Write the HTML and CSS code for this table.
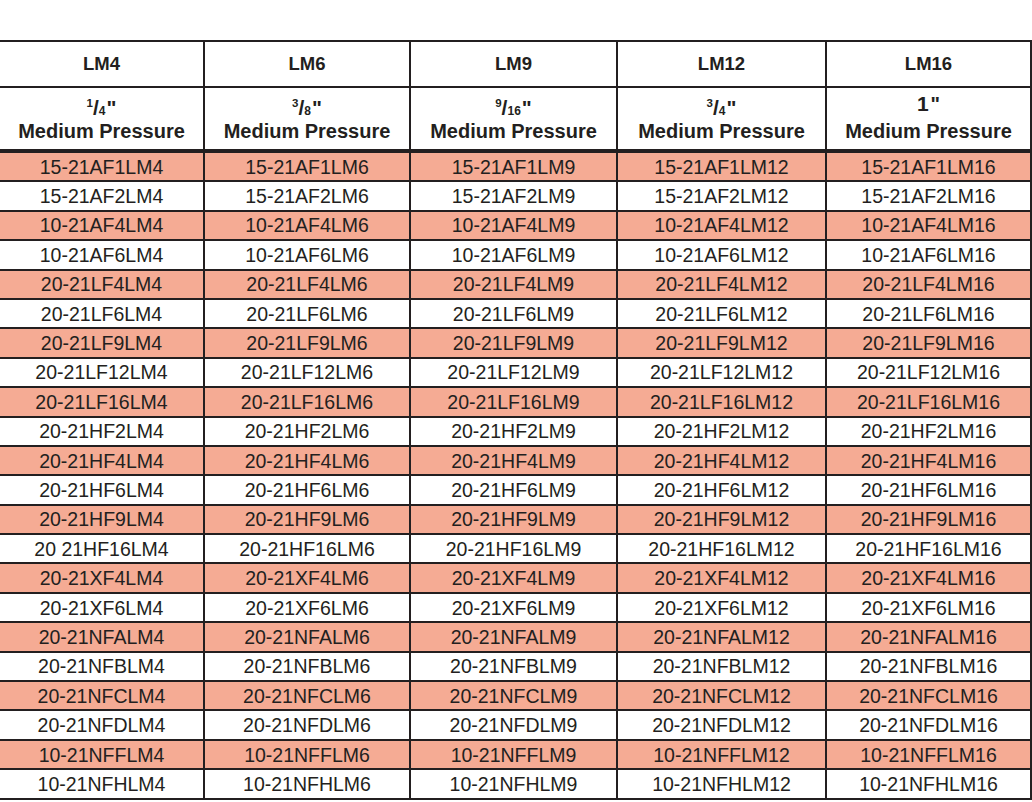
FILE: index.html
```html
<!DOCTYPE html>
<html lang="en">
<head>
<meta charset="utf-8">
<title>LM Fittings</title>
<link rel="stylesheet" href="styles.css">
</head>
<body>
<table class="spec">
  <colgroup>
    <col class="c1"><col class="c2"><col class="c3"><col class="c4"><col class="c5">
  </colgroup>
  <thead>
    <tr class="h1">
      <th>LM4</th><th>LM6</th><th>LM9</th><th>LM12</th><th>LM16</th>
    </tr>
    <tr class="h2">
      <th><div class="frac"><sup>1</sup>/<sub>4</sub><span class="q">"</span></div><div class="mp">Medium Pressure</div></th>
      <th><div class="frac"><sup>3</sup>/<sub>8</sub><span class="q">"</span></div><div class="mp">Medium Pressure</div></th>
      <th><div class="frac"><sup>9</sup>/<sub>16</sub><span class="q">"</span></div><div class="mp">Medium Pressure</div></th>
      <th><div class="frac"><sup>3</sup>/<sub>4</sub><span class="q">"</span></div><div class="mp">Medium Pressure</div></th>
      <th><div class="frac"><span class="big">1<span class="q">"</span></span></div><div class="mp">Medium Pressure</div></th>
    </tr>
  </thead>
  <tbody>
    <tr class="hl"><td>15-21AF1LM4</td><td>15-21AF1LM6</td><td>15-21AF1LM9</td><td>15-21AF1LM12</td><td>15-21AF1LM16</td></tr>
    <tr><td>15-21AF2LM4</td><td>15-21AF2LM6</td><td>15-21AF2LM9</td><td>15-21AF2LM12</td><td>15-21AF2LM16</td></tr>
    <tr class="hl"><td>10-21AF4LM4</td><td>10-21AF4LM6</td><td>10-21AF4LM9</td><td>10-21AF4LM12</td><td>10-21AF4LM16</td></tr>
    <tr><td>10-21AF6LM4</td><td>10-21AF6LM6</td><td>10-21AF6LM9</td><td>10-21AF6LM12</td><td>10-21AF6LM16</td></tr>
    <tr class="hl"><td>20-21LF4LM4</td><td>20-21LF4LM6</td><td>20-21LF4LM9</td><td>20-21LF4LM12</td><td>20-21LF4LM16</td></tr>
    <tr><td>20-21LF6LM4</td><td>20-21LF6LM6</td><td>20-21LF6LM9</td><td>20-21LF6LM12</td><td>20-21LF6LM16</td></tr>
    <tr class="hl"><td>20-21LF9LM4</td><td>20-21LF9LM6</td><td>20-21LF9LM9</td><td>20-21LF9LM12</td><td>20-21LF9LM16</td></tr>
    <tr><td>20-21LF12LM4</td><td>20-21LF12LM6</td><td>20-21LF12LM9</td><td>20-21LF12LM12</td><td>20-21LF12LM16</td></tr>
    <tr class="hl"><td>20-21LF16LM4</td><td>20-21LF16LM6</td><td>20-21LF16LM9</td><td>20-21LF16LM12</td><td>20-21LF16LM16</td></tr>
    <tr><td>20-21HF2LM4</td><td>20-21HF2LM6</td><td>20-21HF2LM9</td><td>20-21HF2LM12</td><td>20-21HF2LM16</td></tr>
    <tr class="hl"><td>20-21HF4LM4</td><td>20-21HF4LM6</td><td>20-21HF4LM9</td><td>20-21HF4LM12</td><td>20-21HF4LM16</td></tr>
    <tr><td>20-21HF6LM4</td><td>20-21HF6LM6</td><td>20-21HF6LM9</td><td>20-21HF6LM12</td><td>20-21HF6LM16</td></tr>
    <tr class="hl"><td>20-21HF9LM4</td><td>20-21HF9LM6</td><td>20-21HF9LM9</td><td>20-21HF9LM12</td><td>20-21HF9LM16</td></tr>
    <tr><td>20 21HF16LM4</td><td>20-21HF16LM6</td><td>20-21HF16LM9</td><td>20-21HF16LM12</td><td>20-21HF16LM16</td></tr>
    <tr class="hl"><td>20-21XF4LM4</td><td>20-21XF4LM6</td><td>20-21XF4LM9</td><td>20-21XF4LM12</td><td>20-21XF4LM16</td></tr>
    <tr><td>20-21XF6LM4</td><td>20-21XF6LM6</td><td>20-21XF6LM9</td><td>20-21XF6LM12</td><td>20-21XF6LM16</td></tr>
    <tr class="hl"><td>20-21NFALM4</td><td>20-21NFALM6</td><td>20-21NFALM9</td><td>20-21NFALM12</td><td>20-21NFALM16</td></tr>
    <tr><td>20-21NFBLM4</td><td>20-21NFBLM6</td><td>20-21NFBLM9</td><td>20-21NFBLM12</td><td>20-21NFBLM16</td></tr>
    <tr class="hl"><td>20-21NFCLM4</td><td>20-21NFCLM6</td><td>20-21NFCLM9</td><td>20-21NFCLM12</td><td>20-21NFCLM16</td></tr>
    <tr><td>20-21NFDLM4</td><td>20-21NFDLM6</td><td>20-21NFDLM9</td><td>20-21NFDLM12</td><td>20-21NFDLM16</td></tr>
    <tr class="hl"><td>10-21NFFLM4</td><td>10-21NFFLM6</td><td>10-21NFFLM9</td><td>10-21NFFLM12</td><td>10-21NFFLM16</td></tr>
    <tr><td>10-21NFHLM4</td><td>10-21NFHLM6</td><td>10-21NFHLM9</td><td>10-21NFHLM12</td><td>10-21NFHLM16</td></tr>
  </tbody>
</table>
</body>
</html>
```

FILE: styles.css
```css
html, body {
  margin: 0;
  padding: 0;
  background: #ffffff;
}

body {
  font-family: "Liberation Sans", Arial, sans-serif;
  color: #231f20;
  overflow: hidden;
}

.spec {
  border-collapse: collapse;
  table-layout: fixed;
  width: 1031px;
  margin-top: 40px;
}

.c1 { width: 204px; }
.c2 { width: 206px; }
.c3 { width: 207px; }
.c4 { width: 209px; }
.c5 { width: 205px; }

.spec th,
.spec td {
  border: 2px solid #231f20;
  padding: 0;
  text-align: center;
  vertical-align: middle;
  white-space: nowrap;
}

.spec tr > :first-child {
  border-left: none;
}

.h1 th {
  height: 44px;
  font-size: 18.5px;
  font-weight: bold;
  line-height: 20px;
}

.h2 th {
  height: 53px;
  padding-top: 8px;
  vertical-align: top;
  border-bottom-width: 4px;
  font-weight: bold;
}

.frac {
  font-size: 21px;
  line-height: 24px;
  height: 24px;
}

.frac sup,
.frac sub {
  line-height: 0;
}

.frac sup {
  font-size: 11.5px;
  vertical-align: 8.5px;
}

.frac sub {
  font-size: 12px;
  vertical-align: 0;
}

.q {
  line-height: 0;
  margin-left: 1px;
}

.big {
  font-size: 21px;
  line-height: 0;
  vertical-align: 4px;
}

.big .q {
  font-size: 20px;
  margin-left: 2px;
}

.mp {
  font-size: 20px;
  line-height: 22px;
}

.spec td {
  height: 27.4px;
  font-size: 19.5px;
  line-height: 22px;
}

.hl td {
  background: #f5ab94;
}
```
